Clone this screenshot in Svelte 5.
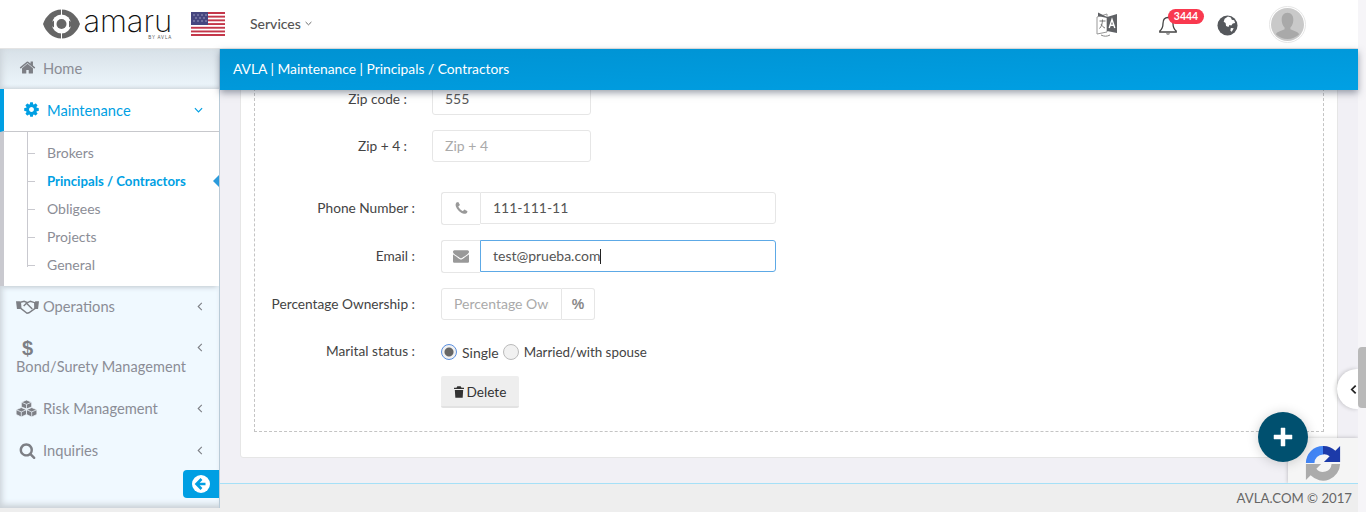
<script>
  const sub = [
    { t: 'Brokers' },
    { t: 'Principals / Contractors', on: true },
    { t: 'Obligees' },
    { t: 'Projects' },
    { t: 'General' }
  ];
  const home = 'M1472 992v480q0 26-19 45t-45 19h-384v-384h-256v384h-384q-26 0-45-19t-19-45v-480q0-1 .5-3t.5-3l575-474 575 474q1 2 1 6zm223-69l-62 74q-8 9-21 11h-3q-13 0-21-7l-692-577-692 577q-12 8-24 7-13-2-21-11l-62-74q-8-10-7-23.5t11-21.5l719-599q32-26 76-26t76 26l244 204v-195q0-14 9-23t23-9h192q14 0 23 9t9 23v408l219 182q10 8 11 21.5t-7 23.5z';
  const search = 'M1216 832q0-185-131.5-316.5t-316.5-131.5-316.5 131.5-131.5 316.5 131.5 316.5 316.5 131.5 316.5-131.5 131.5-316.5zm512 832q0 52-38 90t-90 38q-54 0-90-38l-343-342q-179 124-399 124-143 0-273.5-55.5t-225-150-150-225-55.5-273.5 55.5-273.5 150-225 225-150 273.5-55.5 273.5 55.5 225 150 150 225 55.5 273.5q0 220-124 399l343 343q37 37 37 90z';
  const cog = 'M1152 896q0-106-75-181t-181-75-181 75-75 181 75 181 181 75 181-75 75-181zm512-109v222q0 12-8 23t-20 13l-185 28q-19 54-39 91 35 50 107 138 10 12 10 25t-9 23q-27 37-99 108t-94 71q-12 0-26-9l-138-108q-44 23-91 38-16 136-29 186-7 28-36 28h-222q-14 0-24.500-8.500t-11.500-21.500l-28-184q-49-16-90-37l-141 107q-10 9-25 9-14 0-25-11-126-114-165-168-7-10-7-23 0-12 8-23 15-21 51-66.500t54-70.500q-27-50-41-99l-183-27q-13-2-21-12.500t-8-23.500v-222q0-12 8-23t19-13l186-28q14-46 39-92-40-57-107-138-10-12-10-24 0-10 9-23 26-36 98.500-107.500t94.500-71.500q13 0 26 10l138 107q44-23 91-38 16-136 29-186 7-28 36-28h222q14 0 24.500 8.500t11.500 21.500l28 184q49 16 90 37l142-107q9-9 24-9 13 0 25 10 129 119 165 170 7 8 7 22 0 12-8 23-15 21-51 66.500t-54 70.500q26 50 41 98l183 28q13 2 21 12.500t8 23.500z';
  const phone = 'M1600 1240q0 27-10 70.500t-21 68.500q-21 50-122 106-94 51-186 51-27 0-53-3.500t-57.500-12.500-47-14.500-55.500-20.500-49-18q-98-35-175-83-127-79-264-216t-216-264q-48-77-83-175-3-9-18-49t-20.500-55.500-14.500-47-12.500-57.500-3.500-53q0-92 51-186 56-101 106-122 25-11 68.500-21t70.500-10q14 0 21 3 18 6 53 76 11 19 30 54t35 63.500 31 53.500q3 4 17.500 25t21.500 35.500 7 28.500q0 20-28.500 50t-62 55-62 53-28.500 46q0 9 5 22.500t8.500 20.500 14 24 11.500 19q76 137 174 235t235 174q2 1 19 11.500t24 14 20.500 8.500 22.500 5q18 0 46-28.500t53-62 55-62 50-28.500q14 0 28.500 7t35.500 21.500 25 17.500q25 15 53.500 31t63.500 35 54 30q70 35 76 53 3 7 3 21z';
  const envelope = 'M1792 710v794q0 66-47 113t-113 47h-1472q-66 0-113-47t-47-113v-794q44 49 101 87 362 246 497 345 57 42 92.500 65.500t94.500 48 110 24.500h2q51 0 110-24.500t94.500-48 92.500-65.500q170-123 498-345 57-39 100-87zm0-294q0 79-49 151t-122 123q-376 261-468 325-10 7-42.500 30.500t-54 38-52 32.500-57.500 27-50 9h-2q-23 0-50-9t-57.500-27-52-32.500-54-38-42.500-30.500q-91-64-262-182.500t-205-142.500q-62-42-117-115.500t-55-136.500q0-78 41.500-130t118.500-52h1472q65 0 112.500 47t47.500 113z';
</script>

<div class="shell">
  <div class="page">
    <header class="top">
      <svg class="logo-mark" viewBox="0 0 37 30" width="37" height="30" aria-hidden="true">
        <path fill="#666" d="M0 15C3 7 9 .5 18.500 .5S34 7 37 15C34 23 28 29.500 18.500 29.500S3 23 0 15Z"/>
        <circle cx="18.500" cy="15" r="9.500" fill="#fff"/>
        <path d="M18 0h1v6h-1zM18 24h1v6h-1z" fill="#fff"/>
        <path d="M6 15l5-3.500v7zM31 15l-5-3.500v7z" fill="#666"/>
        <circle cx="18.500" cy="15" r="5" fill="#666"/>
      </svg>
      <div class="wordmark"><span class="amaru">amaru</span><span class="by">BY AVLA</span></div>
      <svg class="flag" viewBox="0 0 34 24" width="34" height="24" aria-hidden="true">
        <rect width="34" height="24" rx="1" fill="#fff"/>
        <g fill="#c4374a">
          <rect y="0" width="34" height="2"/><rect y="3.700" width="34" height="1.900"/><rect y="7.400" width="34" height="1.900"/><rect y="11.100" width="34" height="1.900"/><rect y="14.800" width="34" height="1.900"/><rect y="18.500" width="34" height="1.900"/><rect y="22" width="34" height="2"/>
        </g>
        <rect width="17" height="13" fill="#46467f"/>
        <g fill="#b9b9d6"><circle cx="3" cy="3" r=".7"/><circle cx="7" cy="3" r=".7"/><circle cx="11" cy="3" r=".7"/><circle cx="15" cy="3" r=".7"/><circle cx="5" cy="6" r=".7"/><circle cx="9" cy="6" r=".7"/><circle cx="13" cy="6" r=".7"/><circle cx="3" cy="9" r=".7"/><circle cx="7" cy="9" r=".7"/><circle cx="11" cy="9" r=".7"/><circle cx="15" cy="9" r=".7"/></g>
      </svg>
      <div class="services">Services
        <svg viewBox="0 0 8 5" width="7" height="5" aria-hidden="true"><path d="M.7.8 4 4 7.3.8" fill="none" stroke="#555" stroke-width="1"/></svg>
      </div>
      <div class="top-right">
        <svg class="tr-lang" viewBox="0 0 24 26" width="24" height="26" aria-hidden="true">
          <path d="M2 6 L12 3 V21 L2 23 Z" fill="#fff" stroke="#999" stroke-width="1"/>
          <path d="M12 6 L22 3 V22 L12 20 Z" fill="#5f6165"/>
          <path d="M3 1.500 L12 6V7L3 5z" fill="#5f6165"/>
          <path d="M4.500 10h6M7.500 8.500c0 4-1 7-3 9M6 13c1 2 2.500 3.500 4 4" fill="none" stroke="#777" stroke-width="1"/>
          <path d="M14.200 17 L17 8.500 L19.800 17 M15.200 14.300h3.600" fill="none" stroke="#fff" stroke-width="1.400"/>
          <path d="M6 24c3 1.600 6 1.600 9 0" fill="none" stroke="#888" stroke-width="1"/>
        </svg>
        <div class="bell">
          <svg viewBox="0 0 20 22" width="20" height="22" aria-hidden="true">
            <path d="M10 2.500c-3.500 0-5 2.800-5 6 0 4-1.300 6-3.200 7.500v1h16.400v-1c-1.900-1.500-3.200-3.500-3.200-7.500 0-3.200-1.500-6-5-6z" fill="none" stroke="#444" stroke-width="1.300"/>
            <path d="M8 18.500c.4 1.400 3.600 1.400 4 0z" fill="#444"/>
          </svg>
          <span class="badge">3444</span>
        </div>
        <svg class="tr-globe" viewBox="0 0 22 22" width="21" height="21" aria-hidden="true">
          <circle cx="11" cy="11" r="10.500" fill="#55585c"/>
          <path d="M8 4l3.500-2.500 3 1 1 2.500 2.500.5 1 3-2.500.5-1.500 2-2-.5-1 2-2.500-1-.5-3-2-1.500z" fill="#fff"/>
          <path d="M14.500 13.500l3 .5-2 3.500-1.500-1z" fill="#fff"/>
        </svg>
        <div class="avatar">
          <svg viewBox="0 0 34 34" width="33" height="33" aria-hidden="true">
            <circle cx="17" cy="17" r="17" fill="#c9c9c9"/>
            <path d="M17 5c4 0 6 3 6 7 0 3-1 6-3 8v2c3 1.500 7 2 9 5a17 17 0 0 1-24 0c2-3 6-3.500 9-5v-2c-2-2-3-5-3-8 0-4 2-7 6-7z" fill="#a9a9a9"/>
          </svg>
        </div>
      </div>
    </header>

    <div class="body">
      <aside class="side">
        <a class="item home">
          <svg class="ic" viewBox="0 0 1792 1792" width="17" height="17" aria-hidden="true"><path d={home} fill="#7d7f85"/></svg>
          <span>Home</span>
        </a>
        <a class="item active">
          <svg class="ic" viewBox="0 0 1792 1792" width="17" height="17" aria-hidden="true"><path d={cog} fill="#009fe3"/></svg>
          <span>Maintenance</span>
          <svg class="caret" viewBox="0 0 10 6" width="9" height="6" aria-hidden="true"><path d="M1 1l4 4 4-4" fill="none" stroke="#009fe3" stroke-width="1.300"/></svg>
        </a>
        <ul class="sub">
          {#each sub as s}
            <li class:on={s.on}>{s.t}</li>
          {/each}
        </ul>
        <a class="item plain">
          <svg class="ic hand" viewBox="0 0 24 15" width="23" height="15" aria-hidden="true">
            <path d="M0 2h4l1 8H1zM24 2h-4l-1 8h4z" fill="#7d7f85"/>
            <path d="M4.500 3l4-1 3.500 1.500L15 2l4.500 1.500 .5 6-6.500 4.500-2 .5-6.500-5z" fill="none" stroke="#7d7f85" stroke-width="1.500"/>
            <path d="M8 7l3-3 6 6" fill="none" stroke="#7d7f85" stroke-width="1.500"/>
          </svg>
          <span>Operations</span>
          <svg class="caret" viewBox="0 0 6 10" width="6" height="9" aria-hidden="true"><path d="M5 1L1 5l4 4" fill="none" stroke="#7d7f85" stroke-width="1.200"/></svg>
        </a>
        <a class="item stacked">
          <span class="dollar">$</span>
          <svg class="caret" viewBox="0 0 6 10" width="6" height="9" aria-hidden="true"><path d="M5 1L1 5l4 4" fill="none" stroke="#7d7f85" stroke-width="1.200"/></svg>
          <span class="full">Bond/Surety Management</span>
        </a>
        <a class="item plain">
          <svg class="ic cubes" viewBox="0 0 22 18" width="21" height="17" aria-hidden="true">
            <g fill="#7d7f85" stroke="#f0f9ff" stroke-width=".8"><path d="M11 0l5.500 2.300v5L11 9.500 5.500 7.300v-5z"/><path d="M5.500 8L11 10.300v5L5.500 18 0 15.300v-5z"/><path d="M16.500 8l5.500 2.300v5L16.500 18 11 15.300v-5z"/></g>
            <g fill="none" stroke="#f0f9ff" stroke-width=".8"><path d="M5.500 2.300L11 4.600l5.500-2.300M11 4.600v4.900M0 10.300l5.500 2.300 5.500-2.300M5.500 12.600V18M11 10.300l5.500 2.300 5.500-2.300M16.500 12.600V18"/></g>
          </svg>
          <span>Risk Management</span>
          <svg class="caret" viewBox="0 0 6 10" width="6" height="9" aria-hidden="true"><path d="M5 1L1 5l4 4" fill="none" stroke="#7d7f85" stroke-width="1.200"/></svg>
        </a>
        <a class="item plain">
          <svg class="ic search" viewBox="0 0 1792 1792" width="17" height="17" aria-hidden="true"><path d={search} fill="#7d7f85"/></svg>
          <span>Inquiries</span>
          <svg class="caret" viewBox="0 0 6 10" width="6" height="9" aria-hidden="true"><path d="M5 1L1 5l4 4" fill="none" stroke="#7d7f85" stroke-width="1.200"/></svg>
        </a>
        <div class="collapse">
          <svg viewBox="0 0 18 18" width="18" height="18" aria-hidden="true">
            <circle cx="9" cy="9" r="9" fill="#fff"/>
            <path d="M9.500 4L4.500 9l5 5M5 9h8.500" fill="none" stroke="#009fe3" stroke-width="2.600"/>
          </svg>
        </div>
      </aside>

      <main class="main">
        <div class="crumb">AVLA | Maintenance | Principals / Contractors</div>
        <div class="viewport">
          <section class="card">
            <div class="dash">
              <div class="row narrow first">
                <label>Zip code :</label>
                <div class="field value">555</div>
              </div>
              <div class="row narrow gap-big">
                <label>Zip + 4 :</label>
                <div class="field ph">Zip + 4</div>
              </div>
              <div class="row">
                <label>Phone Number :</label>
                <div class="group">
                  <span class="addon"><svg viewBox="0 0 1792 1792" width="15" height="15" aria-hidden="true"><path d={phone} fill="#999"/></svg></span>
                  <div class="field value grow">111-111-11</div>
                </div>
              </div>
              <div class="row">
                <label>Email :</label>
                <div class="group">
                  <span class="addon"><svg viewBox="0 0 1792 1792" width="16" height="16" aria-hidden="true"><path d={envelope} fill="#999"/></svg></span>
                  <div class="field value grow focus">test@prueba.com<i class="cursor"></i></div>
                </div>
              </div>
              <div class="row pct-row">
                <label>Percentage Ownership :</label>
                <div class="group short">
                  <div class="field ph pct"><span class="clip">Percentage Ownership</span></div>
                  <span class="addon right">%</span>
                </div>
              </div>
              <div class="row status">
                <label>Marital status :</label>
                <div class="radios">
                  <span class="radio checked"></span><span>Single</span>
                  <span class="radio second"></span><span class="married">Married/with spouse</span>
                </div>
              </div>
              <div class="row last">
                <span class="spacer"></span>
                <button class="del" type="button">
                  <svg viewBox="0 0 12 14" width="10" height="12" aria-hidden="true"><path d="M4 0h4l1 2h3v1.500H0V2h3zM1 4.500h10l-.6 9.500H1.600z" fill="#333"/></svg>
                  Delete
                </button>
              </div>
            </div>
          </section>
          <div class="recaptcha">
            <svg viewBox="0 0 40 40" width="38" height="38" aria-hidden="true">
              <path d="M20 2A18 18 0 0 1 33 7L38 2V19H21L27 13A9 9 0 0 0 20 11Z" fill="#1c3aa9"/>
              <path d="M20 2V11A9 9 0 0 0 11 20H2A18 18 0 0 1 20 2Z" fill="#4285f4"/>
              <path d="M2 21H18L13 26A9 9 0 0 0 29 21H38A18 18 0 0 1 7 33L2 38Z" fill="#ababab"/>
            </svg>
          </div>
          <button class="fab" type="button" aria-label="Add">
            <svg viewBox="0 0 20 20" width="20" height="20" aria-hidden="true"><path d="M8 1h4v7h7v4h-7v7H8v-7H1V8h7z" fill="#fff" stroke="#fff" stroke-width=".5" stroke-linejoin="round"/></svg>
          </button>
          <div class="tab">
            <svg viewBox="0 0 8 12" width="7" height="11" aria-hidden="true"><path d="M6.500 1.500L2 6l4.500 4.500" fill="none" stroke="#222" stroke-width="2"/></svg>
          </div>
        </div>
        <footer class="foot">AVLA.COM © 2017</footer>
      </main>
    </div>
  </div>
  <div class="scrollbar"><span class="thumb"></span></div>
</div>

<style>
  :global(body) { margin: 0; overflow: hidden; background: #fff; }
  .shell { display: flex; width: 1366px; height: 512px; overflow: hidden; font-family: Lato, "Liberation Sans", sans-serif; font-size: 15px; color: #444; }
  .page { flex: 1; min-width: 0; display: flex; flex-direction: column; }
  .scrollbar { width: 8px; background: #f6f5f8; padding-top: 347px; box-sizing: border-box; }
  .thumb { display: block; height: 61px; border-radius: 4px 0 0 4px; background: #b9b9b9; }

  .top { height: 49px; box-sizing: border-box; background: #fff; display: flex; align-items: center; padding-left: 43px; border-bottom: 1px solid #e4e4e4; flex: none; }
  .logo-mark { flex: none; margin-top: -1px; }
  .wordmark { margin-left: 2px; width: 90px; display: flex; flex-direction: column; align-items: flex-end; line-height: 1; }
  .amaru { font-family: Inter, sans-serif; font-weight: 200; font-size: 31px; letter-spacing: -.1px; color: #111; line-height: 26px; margin-top: 1px; }
  .by { font-family: "Liberation Sans", sans-serif; font-size: 4.500px; letter-spacing: .8px; color: #555; line-height: 7px; }
  .flag { margin-left: 19px; flex: none; }
  .services { margin-left: 25px; margin-top: -2px; font-size: 14px; color: #555; font-weight: 500; display: flex; align-items: center; gap: 4px; }
  .top-right { margin-left: auto; display: flex; align-items: center; }
  .tr-lang { margin-right: 39px; }
  .bell { position: relative; width: 20px; height: 22px; margin-right: 39px; margin-top: 3px; }
  .badge { position: absolute; left: 10px; top: -6px; width: 36px; height: 15px; border-radius: 8px; background: #f9394f; color: #fff; font-size: 10.500px; font-weight: 700; line-height: 15px; text-align: center; }
  .tr-globe { margin-right: 31px; margin-top: 2px; }
  .avatar { width: 33px; height: 33px; border-radius: 50%; border: 1px solid #e6e6e6; padding: 1px; margin-right: 52px; overflow: hidden; background: #fff; }
  .avatar svg { display: block; }

  .body { flex: 1; display: flex; min-height: 0; background: #eee; }
  .side { width: 220px; flex: none; box-sizing: border-box; height: 459px; background: #f0f9ff; border-right: 1px solid #b9cbd8; position: relative; box-shadow: inset 5px 0 6px -3px #ccd3d9, inset 0 -6px 6px -3px #c9cfd5; color: #8b8d96; }
  .item { display: flex; align-items: center; position: relative; height: 40px; padding: 0 19px; box-sizing: border-box; font-size: 14.700px; }
  .item .ic { flex: none; margin-right: 7px; }
  .item .ic.hand { margin-left: -3px; margin-right: 4px; }
  .item .ic.cubes { margin-left: -3px; margin-right: 6px; }
  .caret { position: absolute; right: 16px; top: 16px; }
  .home { height: 40px; padding-bottom: 3px; background: linear-gradient(#d8e1e8, #edf6fc); box-shadow: inset 5px 0 6px -3px #ccd3d9, inset 0 -4px 4px -3px #c9cfd5; }
  .active { height: 43px; background: #fff; color: #009fe3; border-left: 4px solid #009fe3; padding-left: 19px; padding-bottom: 1px; border-bottom: 1px solid #c8c8cc; }
  .active .caret { top: 18px; }
  .sub { list-style: none; margin: 0; padding: 7px 0 7px 0; background: #fff; border-left: 4px solid #c9c9cf; box-shadow: 0 3px 5px -2px #bcc5cc; position: relative; font-size: 14px; color: #8b8d96; }
  .sub::before { content: ""; position: absolute; left: 23px; top: 0; bottom: 19px; width: 1px; background: #c9c9cf; }
  .sub li { height: 28px; line-height: 28px; padding-left: 43px; position: relative; }
  .sub li::before { content: ""; position: absolute; left: 24px; top: 14px; width: 7px; height: 1px; background: #c9c9cf; }
  .sub li.on { color: #009fe3; font-weight: 700; font-size: 13.200px; }
  .sub li.on::after { content: ""; position: absolute; right: 0; top: 8px; border: 6px solid transparent; border-right: 6px solid #2b9bdc; border-left: 0; }
  .plain { height: 42px; padding-bottom: 2px; }
  .stacked { display: block; height: 60px; padding: 10px 19px 0 16px; font-size: 14.500px; }
  .stacked .caret { top: 15px; }
  .dollar { display: block; font-family: "Liberation Sans", sans-serif; font-weight: 700; font-size: 20px; line-height: 20px; color: #7d7f85; margin-left: 6px; }
  .full { display: block; line-height: 20px; margin-top: -1px; white-space: nowrap; letter-spacing: .08px; }
  .collapse { position: absolute; right: 0; top: 421px; width: 36px; height: 28px; border-radius: 4px 0 0 4px; background: #009fe3; display: flex; align-items: center; justify-content: center; }

  .main { flex: 1; min-width: 0; display: flex; flex-direction: column; position: relative; background: #f1f0f5; }
  .crumb { height: 41px; line-height: 40px; flex: none; background: linear-gradient(178deg, #0092d2, #00a0e4); color: #fff; padding-left: 13px; font-size: 13.800px; box-shadow: 0 3px 7px rgba(60, 70, 90, .5); position: relative; z-index: 2; }
  .viewport { flex: 1; min-height: 0; overflow: hidden; display: flex; flex-direction: column; justify-content: flex-end; padding: 0 20px 25px 20px; position: relative; }
  .card { background: #fff; border: 1px solid #e6e6e6; border-radius: 3px; padding: 0 13px 25px 13px; flex: none; }
  .dash { border: 1px dashed #c4c4c4; border-top: 0; padding-bottom: 23px; color: #444; font-size: 14px; }
  .row { display: flex; align-items: center; gap: 25px; margin-bottom: 16px; height: 32px; }
  .row label { width: 160px; margin-right: 1px; text-align: right; white-space: nowrap; flex: none; font-size: 13.700px; position: relative; top: -1px; }
  .row.narrow label { width: 152px; margin-right: 0; }
  .row.narrow .field { width: 159px; flex: none; }
  .row.first { margin-bottom: 15px; }
  .row.narrow.gap-big { margin-bottom: 30px; }
  .field { height: 32px; box-sizing: border-box; border: 1px solid #e6e6e6; border-radius: 3px; padding: 0 12px; line-height: 30px; background: #fff; overflow: hidden; white-space: nowrap; }
  .clip { display: block; overflow: hidden; }
  .ph { color: #aaa; }
  .value { color: #555; }
  .group { display: flex; width: 335px; }
  .group.short { width: 154px; }
  .addon { width: 39px; height: 33px; box-sizing: border-box; flex: none; border: 1px solid #e6e6e6; border-right: 0; border-radius: 3px 0 0 3px; display: flex; align-items: center; justify-content: center; background: #fff; }
  .addon.right { width: 33px; height: 32px; border-right: 1px solid #e6e6e6; border-left: 0; border-radius: 0 3px 3px 0; color: #888; font-family: "Liberation Sans", sans-serif; font-weight: 700; font-size: 14px; }
  .grow { flex: 1; border-radius: 0 3px 3px 0; }
  .pct { flex: 1; border-radius: 3px 0 0 3px; min-width: 0; }
  .focus { border-color: #5da9e6; }
  .cursor { display: inline-block; width: 1px; height: 15px; background: #222; vertical-align: -3px; }
  .pct-row { margin-bottom: 23px; }
  .status { margin-bottom: 15px; height: 18px; }
  .row.status label { top: -2px; }
  .radios { display: flex; align-items: center; gap: 5px; }
  .radio { width: 16px; height: 16px; box-sizing: border-box; border-radius: 50%; border: 1px solid #bbb; background: #f1f1f1; }
  .radio.second { margin-left: -1px; }
  .radio.checked { border-color: #5a8fe0; background: radial-gradient(circle, #666 0 4px, #f1f1f1 5px); }
  .married { font-size: 13.400px; }
  .last { margin-bottom: 0; }
  .spacer { width: 161px; flex: none; }
  .del { height: 32px; width: 78px; box-sizing: border-box; font: inherit; font-size: 13.600px; color: #333; background: #eee; border: 0; border-bottom: 2px solid #e2e2e2; border-radius: 2px; display: flex; align-items: center; justify-content: center; gap: 3px; padding: 2px 0 0; }

  .recaptcha { position: absolute; right: 0; bottom: 0; width: 70px; height: 45px; background: #f5f5f5; box-shadow: 0 0 4px rgba(0, 0, 0, .25); overflow: hidden; display: flex; justify-content: center; padding-top: 6px; box-sizing: border-box; }
  .fab { position: absolute; right: 50px; bottom: 21px; width: 50px; height: 50px; border-radius: 50%; border: 0; padding: 0; background: #00506f; display: flex; align-items: center; justify-content: center; box-shadow: 0 1px 12px rgba(0, 0, 0, .18); z-index: 3; }
  .tab { position: absolute; right: 0; top: 279px; width: 21px; height: 40px; box-sizing: border-box; padding-right: 1px; background: #fff; border-radius: 20px 0 0 20px; box-shadow: -1px 0 4px rgba(0, 0, 0, .2); display: flex; align-items: center; justify-content: flex-end; }
  .foot { height: 29px; flex: none; box-sizing: border-box; background: #eee; border-top: 1px solid #a5e0f7; text-align: right; padding-right: 6px; line-height: 28px; color: #666; font-size: 13.200px; position: relative; }
</style>
